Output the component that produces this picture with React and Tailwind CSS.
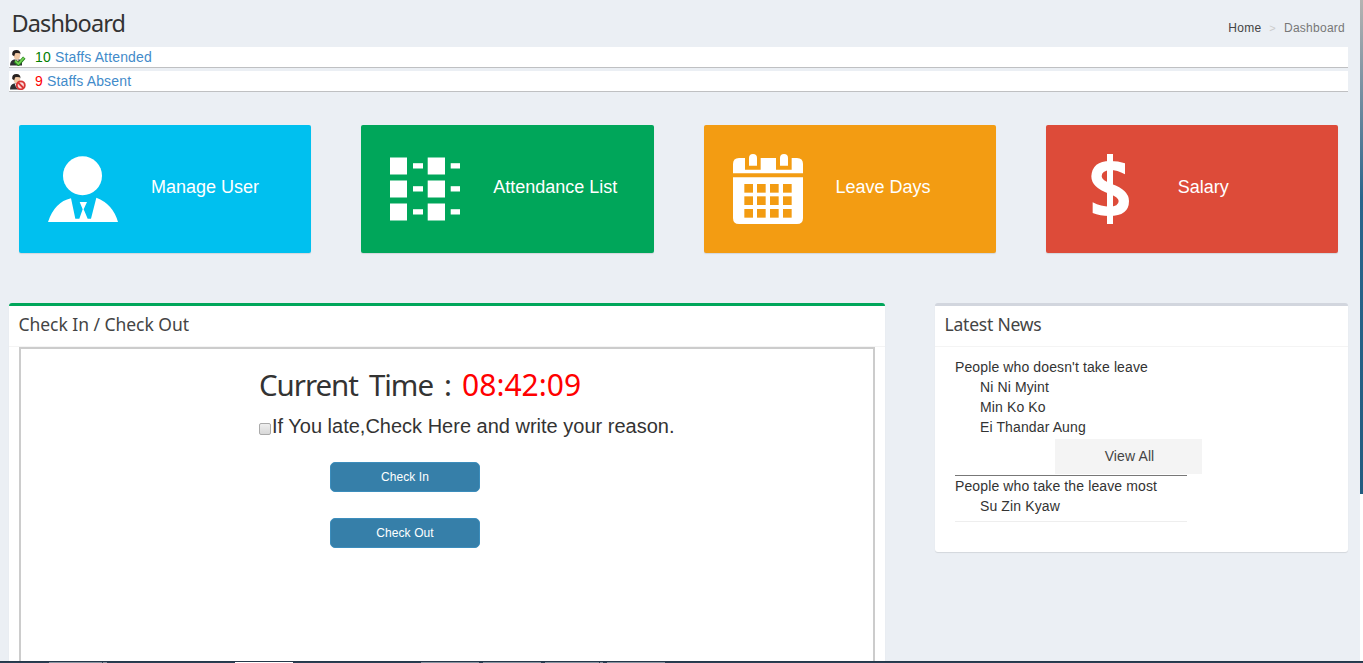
import React from "react";

function StaffIcon({ absent }) {
  return (
    <svg className="block h-4 w-4 shrink-0" viewBox="0 0 16 16">
      <path d="M0 15.5 Q0 10.5 4 9.6 L9 9.2 L12 11 L12 15.5Z" fill="#2e3032" />
      <path d="M4.7 9.7 L8.7 9.3 L7.6 14.5 L6.2 13.8Z" fill="#f1efed" />
      <path d="M6.6 10.5 h1 l.3 4 h-1.3Z" fill="#963b34" />
      <ellipse cx="6.9" cy="5.3" rx="3.2" ry="4.2" fill="#f1c9a6" />
      <path d="M2.2 5 Q1.700 0 6.400 0 Q10.800 0 10.400 4.500 L9.6 3.3 Q7 2.8 5.2 3.2 L4.2 6.2Z" fill="#28221f" />
      {absent ? (
        <g fill="none" stroke="#d93434" strokeWidth="1.8">
          <circle cx="10.800" cy="11.3" r="4" fill="#fbdada" />
          <path d="M8.2 8.7 L13.4 14" />
        </g>
      ) : (
        <g fill="none">
          <path d="M4.9 11 L8.4 14.2 L14.3 7.7" stroke="#27831f" strokeWidth="3.3" />
          <path d="M5.3 11.2 L8.4 13.8 L13.9 7.9" stroke="#75d455" strokeWidth="1.7" />
        </g>
      )}
    </svg>
  );
}

function UserIcon() {
  return (
    <svg className="block h-[70px] w-[70px]" viewBox="114 117 210 210" fill="#fff">
      <circle cx="217.500" cy="182" r="58.500" />
      <path d="M114 321 Q134 261 183 250 L196 311 H208 L218 283 L209 261 H231 L221 283 L233 311 H243 L259 248 Q309 267 324 321Z" />
    </svg>
  );
}

function ListIcon() {
  return (
    <svg className="block h-[70px] w-[70px]" viewBox="0 0 70 70" fill="#fff">
      {[3.5, 26.5, 49.5].map((y) => (
        <g key={y}>
          <rect x="0" y={y} width="17" height="17" />
          <rect x="23" y={y + 5.7} width="10" height="5.300" />
          <rect x="37.700" y={y} width="17.300" height="17" />
          <rect x="60.700" y={y + 5.7} width="9.300" height="5.300" />
        </g>
      ))}
    </svg>
  );
}

function CalendarIcon() {
  return (
    <svg className="block h-[70px] w-[70px]" viewBox="129 117 210 210" fill="#fff">
      <path d="M129 175 V147 Q129 129 147 129 H165 V164 H212 V129 H258 V164 H305 V129 H321 Q339 129 339 147 V175Z" />
      <path d="M177 152 V129 A12 12 0 0 1 201 129 V152Z M270 152 V129 A12 12 0 0 1 294 129 V152Z" />
      <path d="M129 187 H339 V309 Q339 327 321 327 H147 Q129 327 129 309Z" />
      {[207, 244, 282].map((y) =>
        [163, 201, 240, 279].map((x) => (
          <rect key={x + "-" + y} x={x} y={y} width="26" height="26" fill="#f39c12" />
        ))
      )}
    </svg>
  );
}

function SalaryIcon() {
  return (
    <svg className="block h-[70px] w-[70px]" viewBox="135 117 210 210" fill="#fff">
      <rect x="231" y="117" width="18" height="210" />
      <path d="M285 145 V178 Q262 165 240 165 Q215 167 215 184 Q215 196 245 207 Q297 225 297 258 Q297 303 238 303 Q210 303 188 294 V262 Q214 275 238 275 Q266 275 266 258 Q266 246 237 236 Q184 218 184 184 Q187 138 240 138 Q265 138 285 145Z" />
    </svg>
  );
}

const TILES = [
  { label: "Manage User", color: "bg-[#00c0ef]", Icon: UserIcon },
  { label: "Attendance List", color: "bg-[#00a65a]", Icon: ListIcon },
  { label: "Leave Days", color: "bg-[#f39c12]", Icon: CalendarIcon },
  { label: "Salary", color: "bg-[#dd4b39]", Icon: SalaryIcon },
];

function StaffRow({ count, label, countColor, absent }) {
  return (
    <div className="flex h-[21px] items-center border-b border-[#bfc0c2] bg-white pl-px text-sm leading-5">
      <div className="pt-px">
        <StaffIcon absent={absent} />
      </div>
      <span className="ml-[9px] whitespace-pre tracking-[0.15px] text-[#428bca]">
        <span className={countColor}>{count}</span> {label}
      </span>
    </div>
  );
}

function Panel({ title, border, tracking, className, children }) {
  return (
    <section className={"rounded-[3px] border-t-[3px] bg-white shadow-[0_1px_1px_rgba(0,0,0,0.1)] " + border + " " + className}>
      <h2 className={"h-[41px] border-b border-[#f4f4f4] pl-[9.5px] font-['Noto_Sans','Open_Sans',sans-serif] text-[17.5px] leading-[37px] text-[#444] " + tracking}>
        {title}
      </h2>
      {children}
    </section>
  );
}

const BUTTON =
  "block h-[30px] w-[150px] rounded-[5px] border border-[#3c8dbc] bg-[#367fa9] text-center text-xs leading-7 tracking-[0.1px] text-white";

export default function App() {
  return (
    <div className="flex h-[663px] w-[1363px] flex-col overflow-hidden bg-[#ebeff4] font-['Liberation_Sans',Arial,sans-serif] text-[#333]">
      <div className="flex min-h-0 flex-1">
        <main className="h-[661px] w-[1360px] overflow-hidden">
          <header className="flex h-[47px] justify-between pr-[15px] pl-[11.5px]">
            <h1 className="font-['Noto_Sans','Open_Sans',sans-serif] text-[23.5px] leading-[46px] tracking-[-0.9px]">Dashboard</h1>
            <nav className="flex text-xs leading-[56px] tracking-[0.25px]">
              <span className="text-[#444]">Home</span>
              <span className="ml-2 text-[11px] text-[#ccc]">&gt;</span>
              <span className="ml-2 text-[#777]">Dashboard</span>
            </nav>
          </header>
          <div className="mr-3 ml-[9px] flex flex-col gap-[3px]">
            <StaffRow count="10" label="Staffs Attended" countColor="text-[#008000]" />
            <StaffRow count="9" label="Staffs Absent" countColor="text-[#ff0000]" absent />
          </div>
          <div className="mt-[33px] mr-[22px] ml-[19px] grid grid-cols-4 gap-[50px]">
            {TILES.map(({ label, color, Icon }) => (
              <div key={label} className={"flex h-32 rounded-xs pt-[29px] pl-[29px] shadow-[0_1px_1px_rgba(0,0,0,0.1)] " + color}>
                <Icon />
                <span className="ml-[33px] text-lg leading-[66px] text-white">{label}</span>
              </div>
            ))}
          </div>
          <div className="mt-[50px] mr-3 ml-[9px] flex items-start justify-between">
            <Panel title="Check In / Check Out" border="border-[#00a65a]" tracking="tracking-[-0.04px]" className="h-[400px] w-[876px]">
              <div className="mx-2.5 h-[356px] border-2 border-[#ccc] pl-[238px]">
                <div className="mt-[13px] flex h-[46px] items-center whitespace-pre font-['Noto_Sans','Open_Sans',sans-serif] text-[30px] leading-[46px]">
                  <span className="text-[29.5px] tracking-[-1.05px] [word-spacing:4.5px]">Current Time : </span>
                  <span className="text-[#ff0000]">08:42:09</span>
                </div>
                <label className="flex h-[34px] items-center text-xl">
                  <span className="mt-[7px] h-3 w-3 rounded-[2px] border border-[#aaa] bg-linear-to-b from-[#eee] to-[#d8d8d8]" />
                  <span className="ml-[1px] pt-0.5">If You late,Check Here and write your reason.</span>
                </label>
                <div className="mt-[20px] ml-[71px] flex flex-col gap-[26px]">
                  <button className={BUTTON}>Check In</button>
                  <button className={BUTTON}>Check Out</button>
                </div>
              </div>
            </Panel>
            <Panel title="Latest News" border="border-[#d2d6de]" tracking="tracking-[-0.22px]" className="h-[249px] w-[413px]">
              <div className="pt-2.5 pl-5 text-sm leading-5 tracking-[0.12px]">
                <p>People who doesn't take leave</p>
                <ul className="pl-[25px]">
                  <li>Ni Ni Myint</li>
                  <li>Min Ko Ko</li>
                  <li>Ei Thandar Aung</li>
                </ul>
                <div className="mt-0.5 ml-[100px] h-[35px] w-[147px] bg-[#f4f4f4] pl-0.5 text-center leading-[35px] text-[#444]">View All</div>
                <div className="mt-px h-px w-[232px] bg-[#777]" />
                <p>People who take the leave most</p>
                <p className="pl-[25px]">Su Zin Kyaw</p>
                <div className="mt-[5px] h-px w-[232px] bg-[#eee]" />
              </div>
            </Panel>
          </div>
        </main>
        <div className="h-[661px] w-[3px] bg-white">
          <div className="h-[494px] bg-linear-to-b from-[#b5b3b1] via-[#28658c] via-40% to-[#225c80]" />
        </div>
      </div>
      <footer className="flex h-0.5 shrink-0 items-end border-t border-[#25384a] bg-[#2a3f53] pl-[49px]">
        <div className="h-px w-[53px] bg-[#8793a0]" />
        <div className="ml-px h-px w-1 bg-[#8793a0]" />
        <div className="ml-[128px] h-px w-[58px] bg-white" />
        <div className="ml-[128px] h-px w-[58px] bg-[#8793a0]" />
        <div className="ml-1 h-px w-[58px] bg-[#8793a0]" />
        <div className="ml-1 h-px w-[54px] bg-[#8793a0]" />
        <div className="ml-px h-px w-[3px] bg-[#8793a0]" />
        <div className="ml-1 h-px w-[58px] bg-[#8793a0]" />
      </footer>
    </div>
  );
}
